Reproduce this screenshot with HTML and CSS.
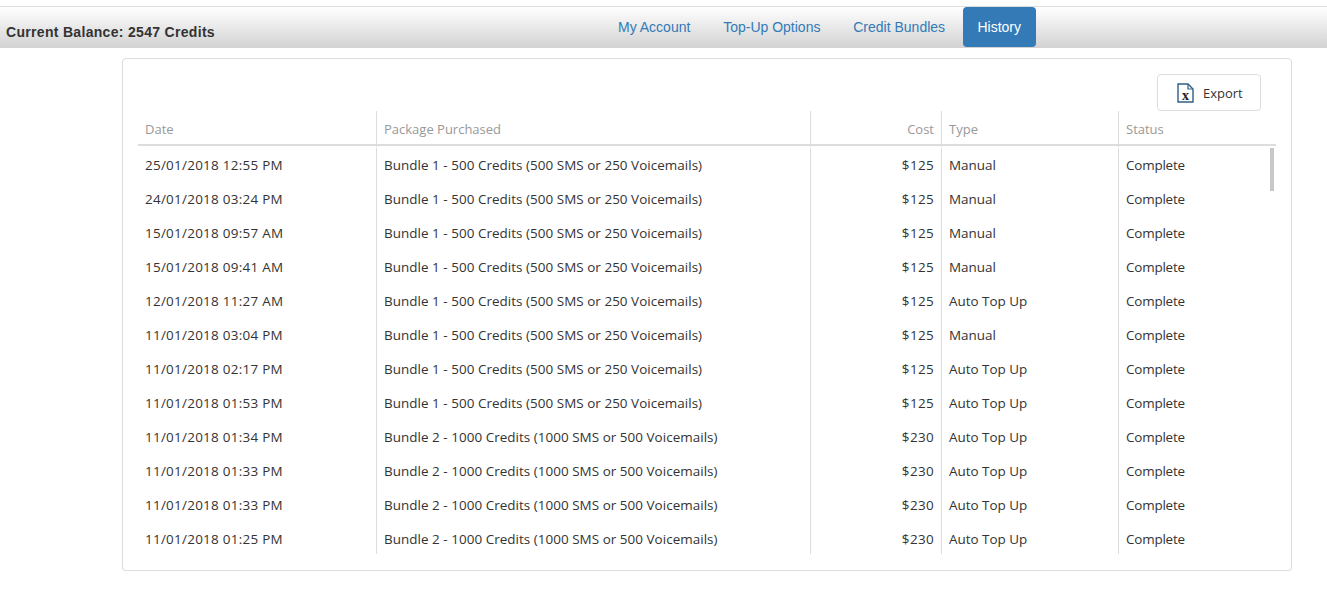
FILE: index.html
```html
<!DOCTYPE html>
<html lang="en">
<head>
<meta charset="utf-8">
<title>History</title>
<link rel="stylesheet" href="styles.css">
</head>
<body>
<header class="topbar">
  <div class="balance">Current Balance: 2547 Credits</div>
  <nav class="tabs">
    <a class="tab">My Account</a>
    <a class="tab">Top-Up Options</a>
    <a class="tab">Credit Bundles</a>
    <a class="tab active">History</a>
  </nav>
</header>
<main class="panel">
  <div class="toolbar">
    <button class="export">
      <svg class="xls" width="17" height="20" viewBox="0 0 17 20"><path d="M1 1h10l5 5v13H1z" fill="#fff" stroke="#2f5f86" stroke-width="1.4"/><path d="M11 1v5h5" fill="none" stroke="#2f5f86" stroke-width="1.2"/><text x="8.5" y="16.5" text-anchor="middle" class="xls-x">x</text></svg>
      <span>Export</span>
    </button>
  </div>
  <div class="table">
    <div class="row head">
      <div class="c date">Date</div><div class="c pkg">Package Purchased</div><div class="c cost">Cost</div><div class="c type">Type</div><div class="c status">Status</div>
    </div>
    <div class="body">
      <div class="thumb"></div>
      <div class="row"><div class="c date">25/01/2018 12:55 PM</div><div class="c pkg">Bundle 1 - 500 Credits (500 SMS or 250 Voicemails)</div><div class="c cost">$125</div><div class="c type">Manual</div><div class="c status">Complete</div></div>
      <div class="row"><div class="c date">24/01/2018 03:24 PM</div><div class="c pkg">Bundle 1 - 500 Credits (500 SMS or 250 Voicemails)</div><div class="c cost">$125</div><div class="c type">Manual</div><div class="c status">Complete</div></div>
      <div class="row"><div class="c date">15/01/2018 09:57 AM</div><div class="c pkg">Bundle 1 - 500 Credits (500 SMS or 250 Voicemails)</div><div class="c cost">$125</div><div class="c type">Manual</div><div class="c status">Complete</div></div>
      <div class="row"><div class="c date">15/01/2018 09:41 AM</div><div class="c pkg">Bundle 1 - 500 Credits (500 SMS or 250 Voicemails)</div><div class="c cost">$125</div><div class="c type">Manual</div><div class="c status">Complete</div></div>
      <div class="row"><div class="c date">12/01/2018 11:27 AM</div><div class="c pkg">Bundle 1 - 500 Credits (500 SMS or 250 Voicemails)</div><div class="c cost">$125</div><div class="c type">Auto Top Up</div><div class="c status">Complete</div></div>
      <div class="row"><div class="c date">11/01/2018 03:04 PM</div><div class="c pkg">Bundle 1 - 500 Credits (500 SMS or 250 Voicemails)</div><div class="c cost">$125</div><div class="c type">Manual</div><div class="c status">Complete</div></div>
      <div class="row"><div class="c date">11/01/2018 02:17 PM</div><div class="c pkg">Bundle 1 - 500 Credits (500 SMS or 250 Voicemails)</div><div class="c cost">$125</div><div class="c type">Auto Top Up</div><div class="c status">Complete</div></div>
      <div class="row"><div class="c date">11/01/2018 01:53 PM</div><div class="c pkg">Bundle 1 - 500 Credits (500 SMS or 250 Voicemails)</div><div class="c cost">$125</div><div class="c type">Auto Top Up</div><div class="c status">Complete</div></div>
      <div class="row"><div class="c date">11/01/2018 01:34 PM</div><div class="c pkg">Bundle 2 - 1000 Credits (1000 SMS or 500 Voicemails)</div><div class="c cost">$230</div><div class="c type">Auto Top Up</div><div class="c status">Complete</div></div>
      <div class="row"><div class="c date">11/01/2018 01:33 PM</div><div class="c pkg">Bundle 2 - 1000 Credits (1000 SMS or 500 Voicemails)</div><div class="c cost">$230</div><div class="c type">Auto Top Up</div><div class="c status">Complete</div></div>
      <div class="row"><div class="c date">11/01/2018 01:33 PM</div><div class="c pkg">Bundle 2 - 1000 Credits (1000 SMS or 500 Voicemails)</div><div class="c cost">$230</div><div class="c type">Auto Top Up</div><div class="c status">Complete</div></div>
      <div class="row"><div class="c date">11/01/2018 01:25 PM</div><div class="c pkg">Bundle 2 - 1000 Credits (1000 SMS or 500 Voicemails)</div><div class="c cost">$230</div><div class="c type">Auto Top Up</div><div class="c status">Complete</div></div>
    </div>
  </div>
</main>
</body>
</html>
```

FILE: styles.css
```css
* { box-sizing: border-box; }
html, body { margin: 0; padding: 0; background: #fff; }
body { padding-top: 6px; font-family: "Open Sans", "Noto Sans", sans-serif; color: #333; overflow: hidden; }

.topbar {
  height: 42px;
  border-top: 1px solid #ddd;
  background: linear-gradient(to bottom, #fff 0%, #d2d2d2 100%);
  display: flex;
  font-family: "Liberation Sans", Arial, sans-serif;
}
.balance {
  font-size: 14px;
  font-weight: bold;
  letter-spacing: .31px;
  color: #333;
  padding: 17px 0 0 6px;
  line-height: 16px;
  width: 603px;
}
.tabs { display: flex; gap: 2.8px; }
.tab {
  display: block;
  height: 40px;
  padding: 0 15px;
  line-height: 40px;
  font-size: 14px;
  color: #337ab7;
  border-radius: 4px;
}
.tab.active { background: #337ab7; color: #fff; padding: 0 14.6px; }

.panel {
  margin: 10px 35px 0 122px;
  height: 513px;
  border: 1px solid #ddd;
  border-radius: 4px;
  box-shadow: 0 1px 1px rgba(0,0,0,.05);
  padding: 15px 15px 0;
  background: #fff;
}
.toolbar { display: flex; justify-content: flex-end; height: 37px; }
.export {
  width: 104px;
  height: 37px;
  margin-right: 15px;
  border: 1px solid #ddd;
  border-radius: 4px;
  background: #fff;
  display: flex;
  align-items: center;
  gap: 9px;
  padding: 0 0 0 19px;
  font: 13px "Open Sans", sans-serif;
  color: #333;
}
.xls { flex: none; }
.xls-x { font: bold 14px "Liberation Serif", serif; fill: #222; }

.table { width: 1138px; }
.row {
  display: grid;
  grid-template-columns: 238px 434px 131px 177px 158px;
  height: 34px;
  font-size: 13.45px;
  line-height: 34px;
  color: #333;
}
.c { padding: 0 7px; white-space: nowrap; }
.c + .c { border-left: 1px solid #ddd; }
.date { letter-spacing: .27px; }
.pkg { letter-spacing: .04px; }
.cost { text-align: right; letter-spacing: .35px; }
.status { letter-spacing: -.2px; }
.head { height: 35px; font-size: 13px; color: #999; border-bottom: 2px solid #ddd; line-height: 36px; }
.head .date, .head .pkg, .head .cost, .head .status { letter-spacing: 0; }
.body { position: relative; height: 408px; overflow: hidden; padding-top: 2px; }
.thumb { position: absolute; top: 2px; right: 2px; width: 4px; height: 43px; background: #c8c8c8; }
```
